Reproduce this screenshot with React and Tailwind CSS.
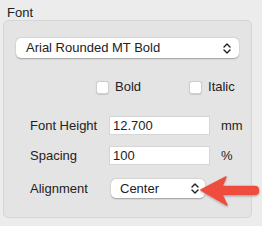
import React from "react";

function Chevrons({ className = "" }) {
  return (
    <svg width="8" height="11" viewBox="0 0 8 11" className={className}>
      <path d="M1 4 L4 1 L7 4" fill="none" stroke="#1f1f1f" strokeWidth="1.4" strokeLinecap="round" strokeLinejoin="round" />
      <path d="M1 7 L4 10 L7 7" fill="none" stroke="#1f1f1f" strokeWidth="1.4" strokeLinecap="round" strokeLinejoin="round" />
    </svg>
  );
}

function Check({ label }) {
  return (
    <div className="flex items-center gap-[6px]">
      <div className="w-[13px] h-[13px] rounded-[3px] bg-white border border-[#cfcfcf] shadow-[0_0.5px_1px_rgba(0,0,0,0.12)]" />
      <span>{label}</span>
    </div>
  );
}

export default function App() {
  return (
    <div
      className="relative w-[262px] h-[226px] bg-[#ececec] text-[13px] text-[#222] overflow-hidden"
      style={{ fontFamily: '"Liberation Sans", Arial, sans-serif' }}
    >
      <div className="pl-[7px] pt-[5px] h-[20px] leading-[15px]">Font</div>
      <div className="ml-[3px] w-[249px] h-[198px] rounded-[5px] border border-[#d6d6d6] bg-[#e4e4e4] pt-[17px]">
        <div className="ml-[12px] w-[223px] h-[20px] rounded-[5px] bg-white shadow-[0_0.5px_1.5px_rgba(0,0,0,0.3)] flex items-center justify-between pl-[10px] pr-[8px]">
          <span>Arial Rounded MT Bold</span>
          <Chevrons />
        </div>
        <div className="flex mt-[22px] h-[14px] items-center">
          <div className="ml-[92px]"><Check label="Bold" /></div>
          <div className="ml-[48px]"><Check label="Italic" /></div>
        </div>
        <div className="mt-[22px] flex items-center h-[19px]">
          <span className="ml-[26px] w-[79px]">Font Height</span>
          <div className="w-[101px] h-[19px] bg-white border border-[#d6d6d6] flex items-center pl-[3px]">12.700</div>
          <span className="ml-[11px]">mm</span>
        </div>
        <div className="mt-[11px] flex items-center h-[19px]">
          <span className="ml-[26px] w-[79px]">Spacing</span>
          <div className="w-[101px] h-[19px] bg-white border border-[#d6d6d6] flex items-center pl-[3px]">100</div>
          <span className="ml-[11px]">%</span>
        </div>
        <div className="mt-[14px] flex items-center h-[19px]">
          <span className="ml-[26px] w-[81px]">Alignment</span>
          <div className="w-[94px] h-[19px] rounded-[5px] bg-white shadow-[0_0.5px_1.5px_rgba(0,0,0,0.3)] flex items-center justify-between pl-[9px] pr-[6px]">
            <span>Center</span>
            <Chevrons />
          </div>
        </div>
      </div>
      <svg className="absolute left-[197px] top-[174px]" width="65" height="36" viewBox="0 0 65 36">
        <defs>
          <filter id="sh" x="-20%" y="-30%" width="140%" height="160%">
            <feDropShadow dx="0" dy="1" stdDeviation="1" floodColor="#000" floodOpacity="0.3" />
          </filter>
        </defs>
        <path
          d="M4 16 L29 3 L25 12.5 L58 12.5 Q61.5 12.5 61.5 16.5 Q61.5 20.5 58 20.5 L25 20.5 L30 31 Z"
          fill="#ee4d3e"
          filter="url(#sh)"
          stroke="#ee4d3e"
          strokeWidth="1.5"
          strokeLinejoin="round"
        />
      </svg>
    </div>
  );
}
